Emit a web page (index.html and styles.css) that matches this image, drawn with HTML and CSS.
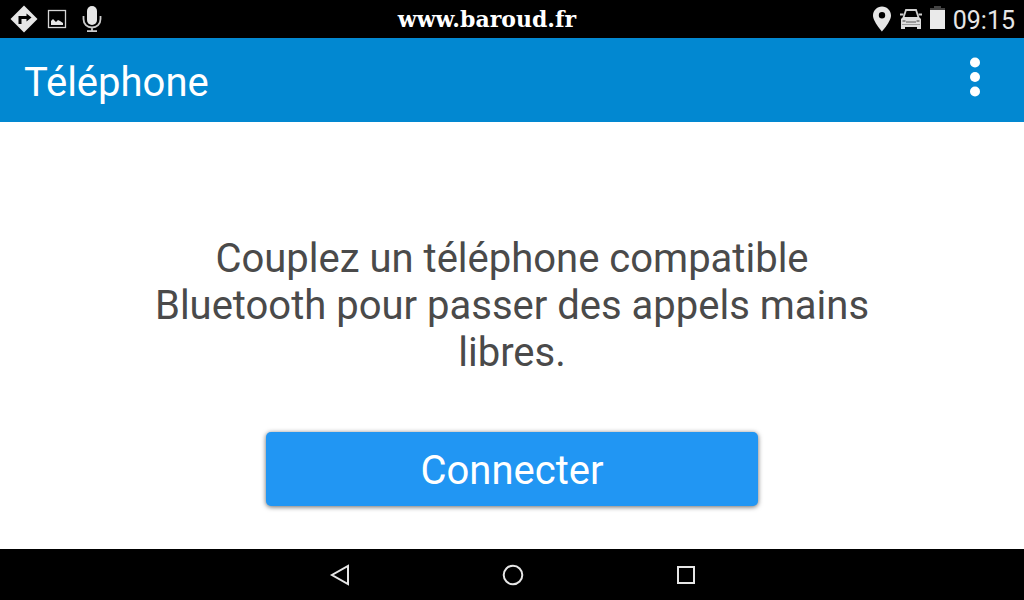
FILE: index.html
```html
<!DOCTYPE html>
<html lang="fr">
<head>
  <meta charset="UTF-8">
  <title>Téléphone</title>
  <meta name="viewport" content="width=device-width, initial-scale=1.0">
  <link rel="stylesheet" href="styles.css">
</head>
<body>
  <header class="status">
    <div class="notifications">
      <svg width="28" height="28" viewBox="0 0 28 28">
        <path fill="#e6e6e6" d="M14 .5 27.500 14 14 27.500.5 14z"/>
        <path fill="none" stroke="#000" stroke-width="3" d="M10 19v-6.500h8"/>
        <path fill="#000" d="M16.500 8.500 21.500 12.500 16.500 16.500z"/>
      </svg>
      <svg width="20" height="20" viewBox="0 0 20 20">
        <rect x="1.500" y="1.500" width="17" height="17" fill="none" stroke="#d6d6d6" stroke-width="1.300"/>
        <path fill="#e6e6e6" d="M4 16v-4l2-2 3 3 2-2 2 1 3 2v2z"/>
      </svg>
      <svg width="20" height="28" viewBox="0 0 20 28">
        <rect x="5" y="1" width="10" height="19" rx="5" fill="#e6e6e6"/>
        <path fill="none" stroke="#ccc" stroke-width="1.800" d="M1.500 11v3c0 5 3.500 8.500 8.500 8.500s8.500-3.500 8.500-8.500v-3M10 22v4M5 26.200h10"/>
      </svg>
    </div>
    <div class="site">www.baroud.fr</div>
    <div class="system">
      <svg width="20" height="28" viewBox="0 0 20 28">
        <path fill="#e6e6e6" fill-rule="evenodd" d="M10 1.500C5 1.500 1 5.500 1 10.500c0 6 9 16 9 16s9-10 9-16c0-5-4-9-9-9zm0 5.500a3.200 3.200 0 1 1 0 6.400 3.200 3.200 0 0 1 0-6.400z"/>
      </svg>
      <svg width="22" height="28" viewBox="0 0 22 28">
        <path fill="none" stroke="#d0d0d0" stroke-width="1.800" d="M3.500 12.500 6 5h10l2.500 7.500"/>
        <path fill="#d0d0d0" d="M0 8.500h3.500v2H0zM18.500 8.500H22v2h-3.500z"/>
        <path fill="#dcdcdc" d="M3 12h16l2 2v10h-4v-2H5v2H1V14z"/>
        <path stroke="#555" stroke-width="2" stroke-dasharray="1 1" d="M6.500 17h9"/>
        <path stroke="#888" stroke-width="2" d="M2.500 16h3M16.500 16h3"/>
        <path stroke="#999" d="M2 19.500h18"/>
      </svg>
      <svg width="15" height="28" viewBox="0 0 15 28">
        <path fill="#444" d="M4 1h7v2h4v2H0V3h4z"/>
        <path fill="#eaeaea" d="M0 5h15v19H0z"/>
      </svg>
      <span class="clock">09:15</span>
    </div>
  </header>

  <div class="appbar">
    <h1>Téléphone</h1>
    <button class="menu" aria-label="Menu">
      <svg width="12" height="40" viewBox="0 0 12 40" fill="#fff">
        <circle cx="6" cy="5.500" r="5"/>
        <circle cx="6" cy="20" r="5"/>
        <circle cx="6" cy="34.500" r="5"/>
      </svg>
    </button>
  </div>

  <main>
    <p>Couplez un téléphone compatible Bluetooth pour passer des appels mains libres.</p>
    <button class="connect">Connecter</button>
  </main>

  <nav>
    <button aria-label="Retour">
      <svg width="22" height="22" viewBox="0 0 22 22"><path d="M19 2v18L3 11z"/></svg>
    </button>
    <button aria-label="Accueil">
      <svg width="22" height="22" viewBox="0 0 22 22"><circle cx="11" cy="11" r="9.300"/></svg>
    </button>
    <button aria-label="Applications récentes">
      <svg width="22" height="22" viewBox="0 0 22 22"><path d="M3 3h16v16H3z"/></svg>
    </button>
  </nav>
</body>
</html>
```
FILE: styles.css
```css
* { box-sizing: border-box; }
body {
  margin: 0;
  min-height: 100vh;
  display: flex;
  flex-direction: column;
  font-family: Roboto, sans-serif;
  background: #fff;
  color: #4a4a4a;
}
button {
  border: none;
  background: none;
  padding: 0;
  font-family: inherit;
}
svg { display: block; }
.status {
  display: flex;
  justify-content: space-between;
  align-items: center;
  height: 38px;
  padding: 0 9px 0 10px;
  background: #000;
  color: #e6e6e6;
}
.notifications, .system {
  display: flex;
  align-items: center;
}
.notifications { gap: 9px; }
.notifications svg:last-child { margin-left: 6px; }
.system { gap: 8px; }
.site {
  font: bold 22px "DejaVu Serif", serif;
  color: #fff;
}
.clock {
  padding-top: 3px;
  font-size: 25px;
  line-height: 38px;
}
.appbar {
  display: flex;
  justify-content: space-between;
  align-items: center;
  height: 84px;
  padding: 0 24px;
  background: #0288d1;
  color: #fff;
}
h1 {
  margin: 6px 0 0;
  font-size: 40px;
  font-weight: 400;
  line-height: 48px;
}
.menu {
  padding: 0 19px 6px;
}
main {
  flex: 1;
  display: flex;
  flex-direction: column;
  align-items: center;
  justify-content: flex-end;
  padding-bottom: 43px;
}
p {
  width: 75%;
  margin: 0 0 56px;
  font-size: 40px;
  line-height: 47px;
  text-align: center;
}
.connect {
  width: 48%;
  height: 74px;
  padding-top: 2px;
  border-radius: 5px;
  background: #2196f3;
  box-shadow: 0 1px 5px rgba(0, 0, 0, 0.6);
  color: #fff;
  font-size: 40px;
}
nav {
  display: flex;
  justify-content: center;
  height: 51px;
  padding-left: 2px;
  background: #000;
}
nav button {
  display: flex;
  justify-content: center;
  align-items: center;
  width: 173px;
}
nav svg {
  fill: none;
  stroke: #e6e6e6;
  stroke-width: 2;
}
```
